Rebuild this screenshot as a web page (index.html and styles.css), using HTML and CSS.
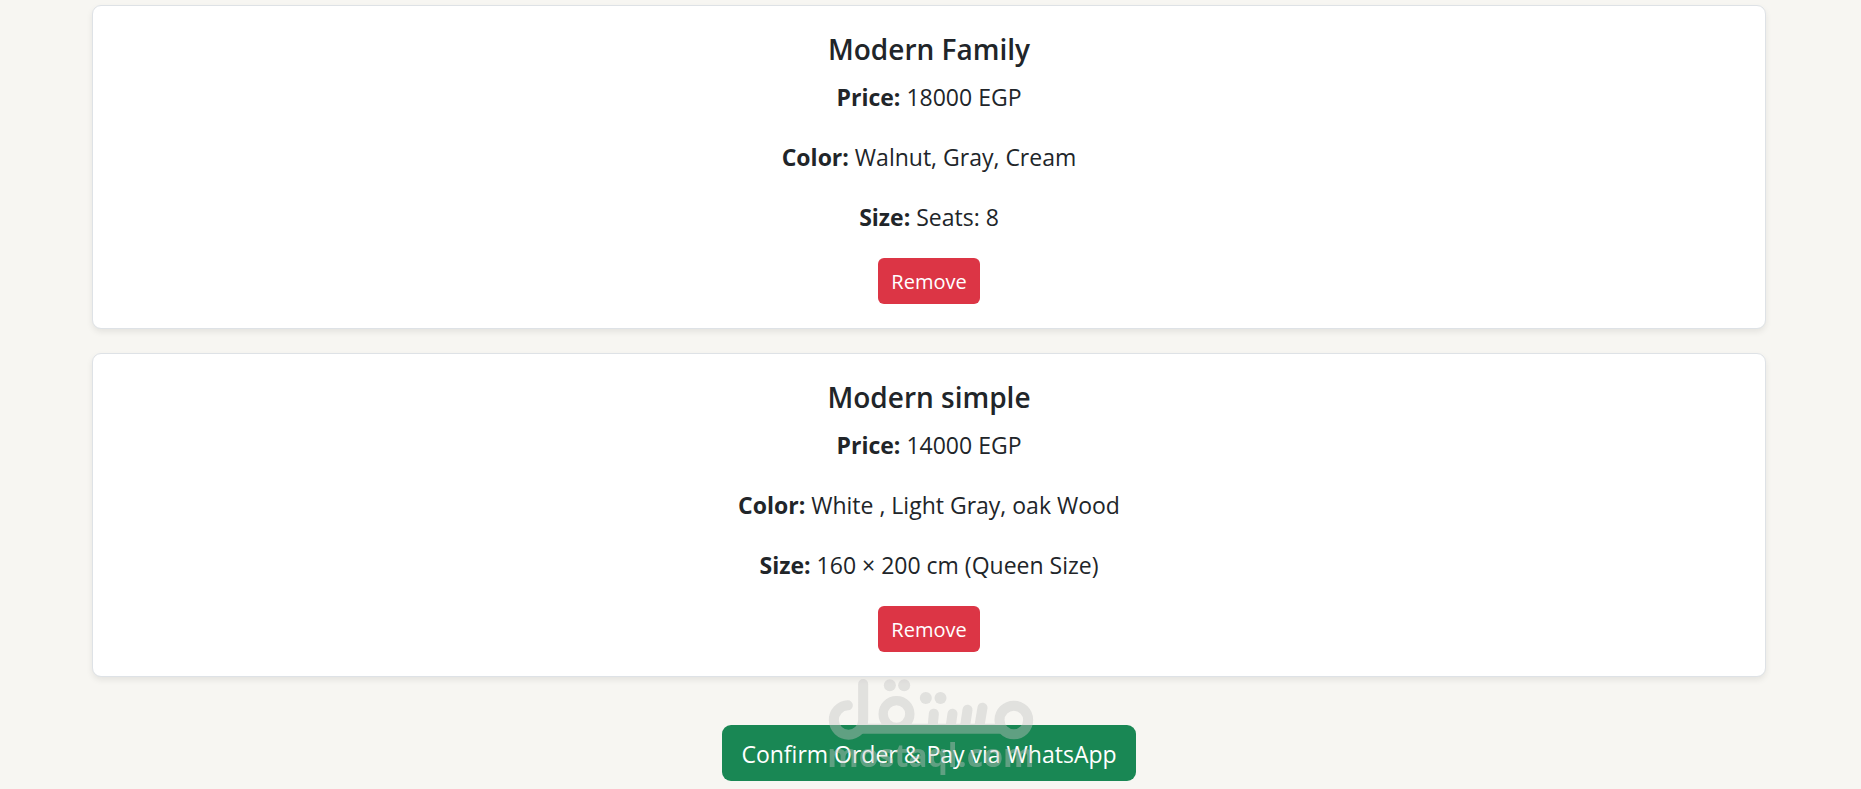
FILE: index.html
```html
<!DOCTYPE html>
<html lang="en">
<head>
    <meta charset="UTF-8">
    <meta name="viewport" content="width=device-width, initial-scale=1.0">
    <title>Cart</title>
    <link rel="stylesheet" href="styles.css">
</head>
<body>
    <main class="cart">
        <div class="card">
            <h5 class="card-title">Modern Family</h5>
            <p><strong>Price:</strong> 18000 EGP</p>
            <p><strong>Color:</strong> Walnut, Gray, Cream</p>
            <p><strong>Size:</strong> Seats: 8</p>
            <button type="button" class="btn btn-danger">Remove</button>
        </div>
        <div class="card">
            <h5 class="card-title">Modern simple</h5>
            <p><strong>Price:</strong> 14000 EGP</p>
            <p><strong>Color:</strong> White , Light Gray, oak Wood</p>
            <p><strong>Size:</strong> 160 × 200 cm (Queen Size)</p>
            <button type="button" class="btn btn-danger">Remove</button>
        </div>
        <div class="checkout">
            <button type="button" class="btn btn-success">Confirm Order &amp; Pay via WhatsApp</button>
        </div>
    </main>

    <!-- watermark -->
    <svg class="watermark" viewBox="24 24 615 288" aria-hidden="true">
        <g fill="none" stroke="#c3c3c3" stroke-width="30" stroke-linecap="round">
            <path d="M82 103A44 44 0 1 0 128 147V39"/>
            <circle cx="228" cy="129" r="40" stroke-width="28"/>
            <path d="M340 128L336 170M396 128L390 170M441 116L433 170M486 110L476 170"/>
            <circle cx="580" cy="147" r="43"/>
            <path d="M118 173H540" stroke-linecap="butt"/>
        </g>
        <g fill="#c3c3c3">
            <circle cx="208" cy="43" r="18"/>
            <circle cx="251" cy="43" r="18"/>
            <circle cx="316" cy="81" r="18"/>
            <circle cx="360" cy="81" r="18"/>
            <text x="331" y="288" text-anchor="middle">mostaql.com</text>
        </g>
    </svg>
</body>
</html>
```

FILE: styles.css
```css
* {
    box-sizing: border-box;
}
body {
    margin: 0;
    background-color: #f7f6f2;
    color: #212529;
    font-family: "Segoe UI", "Open Sans", "Noto Sans", sans-serif;
    font-size: 23px;
    line-height: 38px;
}
.cart {
    padding: 5px 95px 9px 92px;
    text-align: center;
}
.card {
    margin-bottom: 24px;
    padding: 24px;
    background-color: #fff;
    border: 1px solid #dee2e6;
    border-radius: 9px;
    box-shadow: 0 3px 6px rgba(0, 0, 0, 0.08);
}
.card-title {
    margin: 0 0 10px;
    font-size: 28px;
    font-weight: 600;
}
.card p {
    margin: 0 0 22px;
}
.btn {
    display: inline-block;
    border: 1px solid transparent;
    color: #fff;
    font-family: inherit;
    cursor: pointer;
    vertical-align: top;
}
.btn-danger {
    padding: 7px 12px 5px;
    background-color: #dc3545;
    border-radius: 6px;
    font-size: 20px;
    line-height: 32px;
}
.btn-success {
    padding: 10px 18px 8px;
    background-color: #198754;
    border-radius: 9px;
    font-size: 23px;
    line-height: 36px;
}
.checkout {
    margin-top: 48px;
}
.watermark {
    position: fixed;
    bottom: 14px;
    left: 50%;
    width: 205px;
    height: 96px;
    overflow: visible;
    transform: translateX(-50%);
    opacity: 0.42;
    pointer-events: none;
}
.watermark text {
    font-size: 96px;
    font-weight: 700;
}
```
